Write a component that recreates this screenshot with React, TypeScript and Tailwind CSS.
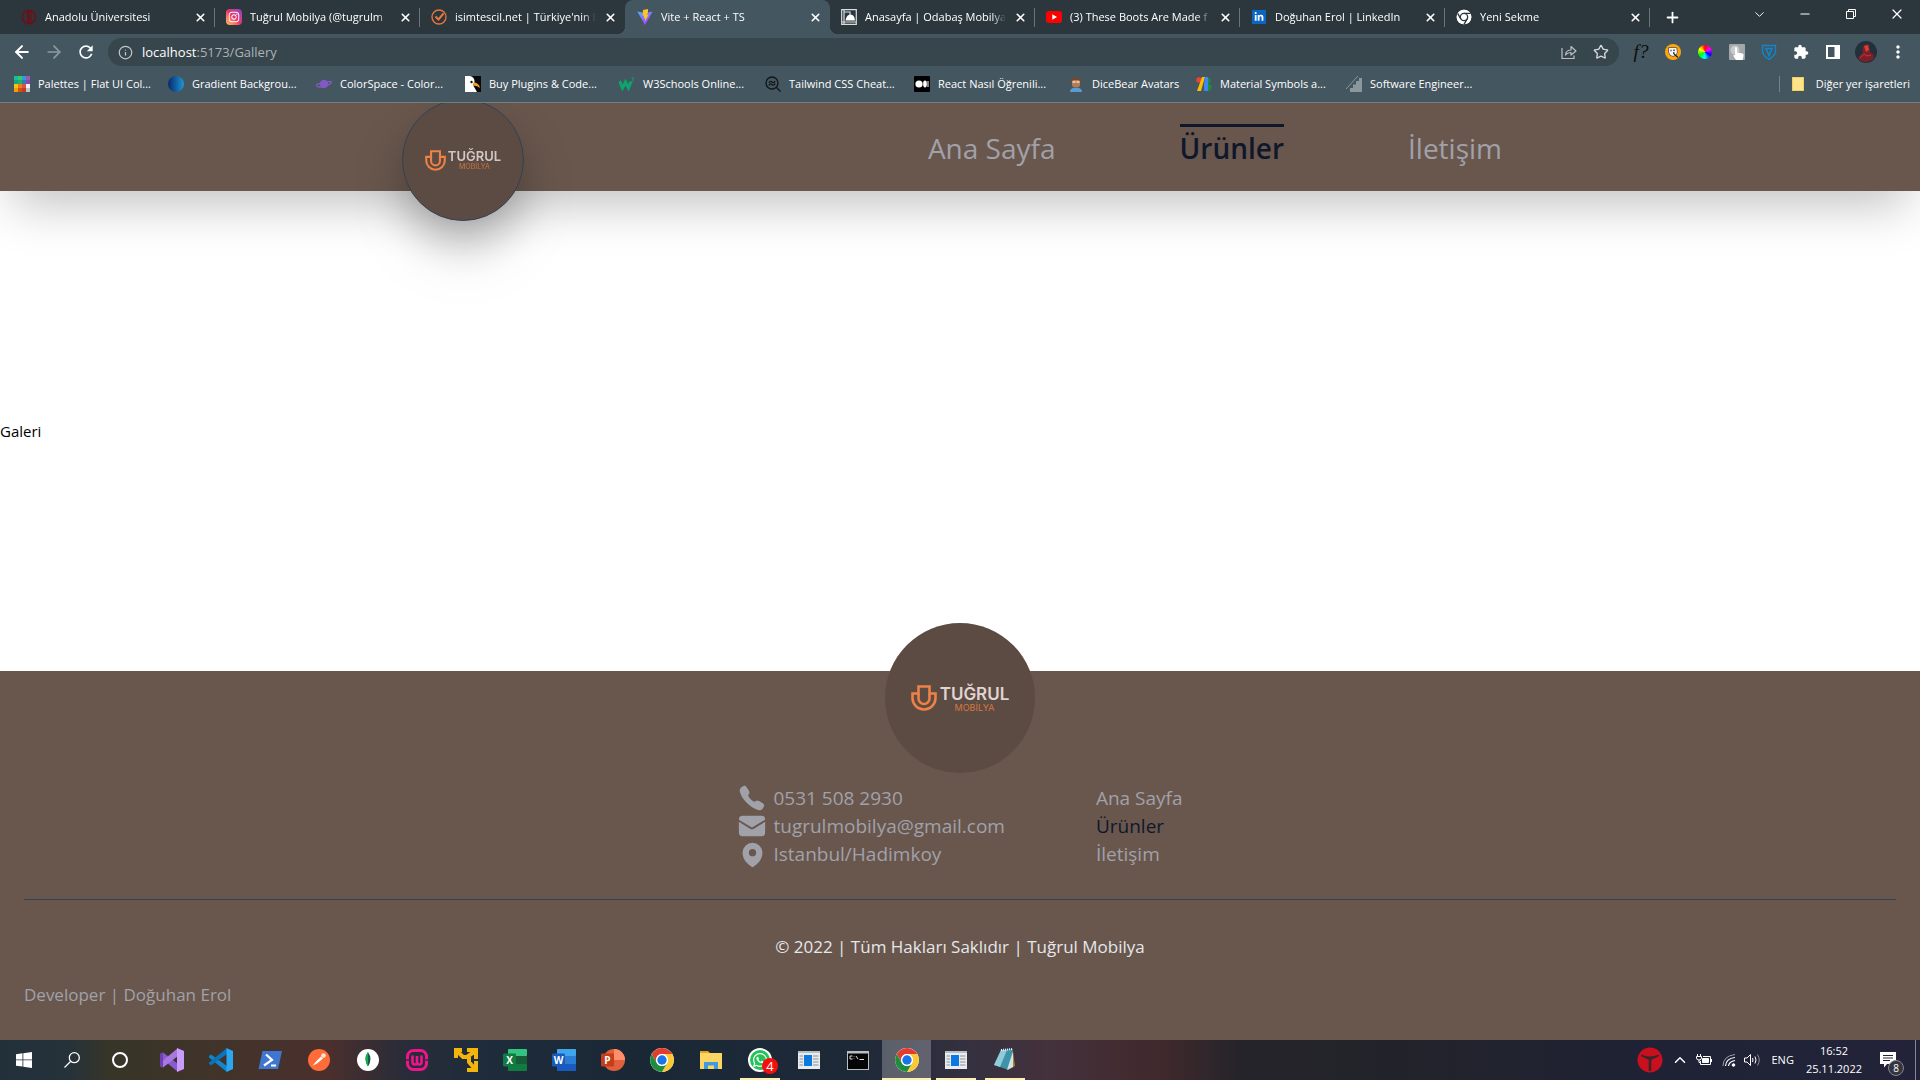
import React, { ReactNode } from "react";
import {
  LuArrowLeft,
  LuArrowRight,
  LuChevronDown,
  LuChevronUp,
  LuInfo,
  LuMinus,
  LuPlus,
  LuStar,
  LuX,
} from "react-icons/lu";
import { MdExtension, MdRefresh, MdMoreVert } from "react-icons/md";
import { HiEnvelope, HiMapPin } from "react-icons/hi2";
import { IoCall } from "react-icons/io5";
import { FaInstagram, FaLinkedinIn, FaWhatsapp } from "react-icons/fa";

/* ---------- Shared drawings ---------- */

function ChromeIcon({ className, mono = false }: { className: string; mono?: boolean }) {
  return (
    <svg viewBox="0 0 48 48" className={className} aria-hidden="true">
      <circle cx="24" cy="24" r="22" fill="#fff" />
      <path d="M4.95 13A22 22 0 0 1 43.05 13H24A11 11 0 0 0 14.47 29.5Z" fill={mono ? "#fff" : "#e33b2e"} />
      <path d="M43.05 13A22 22 0 0 1 24 46L33.53 29.5A11 11 0 0 0 24 13Z" fill={mono ? "#fff" : "#fcc934"} />
      <path d="M24 46A22 22 0 0 1 4.95 13L14.47 29.5A11 11 0 0 0 33.53 29.5Z" fill={mono ? "#fff" : "#1e8e3e"} />
      {mono ? (
        <g stroke="#2c373d" strokeWidth="4" fill="none">
          <circle cx="24" cy="24" r="11" />
          <path d="M24 13H44M14.5 29.5L5 13M33.5 29.5L24 46" />
        </g>
      ) : (
        <>
          <circle cx="24" cy="24" r="11" fill="#fff" />
          <circle cx="24" cy="24" r="8.6" fill="#1a73e8" />
        </>
      )}
    </svg>
  );
}

function Brand({ large = false }: { large?: boolean }) {
  return (
    <span className={large ? "flex items-center gap-[3px] font-['Inter',sans-serif]" : "flex items-center gap-0.5 font-['Inter',sans-serif]"}>
      <svg viewBox="0 0 26 26" className={large ? "size-[26px]" : "size-[21px]"} fill="none" stroke="#ee8145" strokeWidth="2.6" aria-hidden="true">
        <path d="M1.5 8.5H7.5V1.5H18.5V8.5H24.5V13A11.5 11.5 0 0 1 1.5 13Z" />
        <path d="M7.5 8.5V13.5A5.5 5.5 0 0 0 18.5 13.5V8.5" />
      </svg>
      <span className="flex flex-col items-center">
        <span className={large ? "text-[17px] leading-[18px] font-semibold text-[#e0d3d1]" : "text-[13px] leading-[14px] font-semibold text-[#d3c6c6]"}>TUĞRUL</span>
        <span className={large ? "text-[9px] leading-[9px] text-[#d67841]" : "text-[7px] leading-[8px] text-[#d07541]"}>MOBİLYA</span>
      </span>
    </span>
  );
}

/* ---------- Browser window ---------- */

type Tab = { title: string; icon: ReactNode; active?: boolean; divider?: boolean };

const tabs: Tab[] = [
  {
    title: "Anadolu Üniversitesi",
    divider: true,
    icon: (
      <svg viewBox="0 0 16 16" className="size-4" fill="none" stroke="#6d0f18" strokeWidth="1.8">
        <circle cx="8" cy="8" r="6.6" />
        <path d="M7 1V15M9.5 1V15" />
      </svg>
    ),
  },
  {
    title: "Tuğrul Mobilya (@tugrulm",
    divider: true,
    icon: (
      <span className="flex size-4 items-center justify-center rounded-[4px] bg-linear-to-tr from-[#fdc04a] via-[#e8336a] to-[#9036c8] text-white">
        <FaInstagram className="size-3" />
      </span>
    ),
  },
  {
    title: "isimtescil.net | Türkiye'nin l",
    icon: (
      <svg viewBox="0 0 16 16" className="size-4" fill="none" stroke="#e8783a">
        <circle cx="8" cy="8" r="7" strokeWidth="1.3" />
        <path d="M4.5 7.5L7.5 10.5L12.5 4.5" strokeWidth="2" />
      </svg>
    ),
  },
  {
    title: "Vite + React + TS",
    active: true,
    icon: (
      <svg viewBox="0 0 16 16" className="size-4">
        <defs>
          <linearGradient id="vite" x1="0" y1="0" x2="0.6" y2="1">
            <stop offset="0" stopColor="#47b5ff" />
            <stop offset="1" stopColor="#b43cfb" />
          </linearGradient>
        </defs>
        <path d="M.3 2.4L8 16L15.7 2.4L8 4Z" fill="url(#vite)" />
        <path d="M11 0L6 1L5.6 6.8L7.2 6.5L6.8 9.5L8.2 9.2L7.8 12.5L11.6 5.8L9.8 6.1L11 3.5Z" fill="#ffc41f" />
      </svg>
    ),
  },
  {
    title: "Anasayfa | Odabaş Mobilya",
    divider: true,
    icon: (
      <svg viewBox="0 0 16 16" className="size-4" fill="none" stroke="#d8dcde">
        <path d="M.7.7H15.3V15.3H.7ZM3 .7V15.3M.7 13H15M3 3H9V6" strokeWidth="1.2" />
        <path d="M4.5 11.5Q5.5 5.500 9.500 5.500T14 11.500Z" fill="#fff" stroke="none" />
      </svg>
    ),
  },
  {
    title: "(3) These Boots Are Made f",
    divider: true,
    icon: (
      <svg viewBox="0 0 16 16" className="size-4">
        <rect y="2" width="16" height="12" rx="3" fill="#f00" />
        <path d="M6.3 5.3V10.700L11 8Z" fill="#fff" />
      </svg>
    ),
  },
  {
    title: "Doğuhan Erol | LinkedIn",
    divider: true,
    icon: (
      <span className="flex size-[14px] items-center justify-center bg-[#0a66c2] text-white">
        <FaLinkedinIn className="size-[10px]" />
      </span>
    ),
  },
  { title: "Yeni Sekme", divider: true, icon: <ChromeIcon className="size-4" mono /> },
];

function TabStrip() {
  return (
    <div className="flex h-[34px] justify-between bg-[#2c373d]">
      <div className="flex pl-2.5">
        {tabs.map((tab) => (
          <div
            key={tab.title}
            className={
              tab.active
                ? "relative flex w-[205px] items-center gap-2 rounded-t-lg bg-[#44565f] pr-2 pl-3 before:absolute before:bottom-0 before:-left-2 before:size-2 before:bg-[radial-gradient(circle_at_0_0,transparent_8px,#44565f_8px)] after:absolute after:-right-2 after:bottom-0 after:size-2 after:bg-[radial-gradient(circle_at_100%_0,transparent_8px,#44565f_8px)]"
                : "relative flex w-[205px] items-center gap-2 pr-2 pl-[11px]"
            }
          >
            <span className="flex size-4 shrink-0 items-center justify-center">{tab.icon}</span>
            <button className="min-w-0 flex-1 mask-r-from-[90%] text-left text-[11px] leading-5 whitespace-nowrap text-white">
              {tab.title}
            </button>
            <button aria-label={`${tab.title} sekmesini kapat`} className="text-white">
              <LuX className="size-[13px]" strokeWidth={3} />
            </button>
            {tab.divider && <span className="absolute top-2 right-0 h-[19px] w-px bg-[#66737a]" />}
          </div>
        ))}
        <button aria-label="Yeni sekme" className="ml-3.5 text-white">
          <LuPlus className="size-[17px]" strokeWidth={2.5} />
        </button>
      </div>
      <div className="flex items-start text-white">
        <button aria-label="Sekmelerde ara" className="flex h-7 w-[46px] items-center justify-center">
          <LuChevronDown className="size-[15px]" strokeWidth={1.5} />
        </button>
        <button aria-label="Simge durumuna küçült" className="flex h-7 w-[46px] items-center justify-center">
          <LuMinus className="size-[14px]" />
        </button>
        <button aria-label="Geri yükle" className="flex h-7 w-[46px] items-center justify-center">
          <svg viewBox="0 0 10 10" className="size-[10px]" fill="none" stroke="currentColor">
            <path d="M.5 2.500H7.500V9.500H.5ZM2.500 2.500V.5H9.500V7.500H7.500" />
          </svg>
        </button>
        <button aria-label="Kapat" className="flex h-7 w-[46px] items-center justify-center">
          <LuX className="size-[16px]" strokeWidth={1.8} />
        </button>
      </div>
    </div>
  );
}

function Toolbar() {
  return (
    <div className="flex h-8 items-center bg-[#44565f] pt-1 text-white">
      <button aria-label="Geri" className="ml-3">
        <LuArrowLeft className="size-5" strokeWidth={2.4} />
      </button>
      <button aria-label="İleri" className="ml-3 text-[#8f9aa0]">
        <LuArrowRight className="size-5" />
      </button>
      <button aria-label="Yenile" className="ml-3">
        <MdRefresh className="size-5" />
      </button>
      <div className="ml-3 flex h-7 flex-1 items-center rounded-full bg-[#37454c] px-2.5">
        <LuInfo className="mr-[9px] size-[15px] text-[#c0c6c9]" />
        <label htmlFor="address" className="text-[13px] leading-5">
          localhost
        </label>
        <input id="address" defaultValue=":5173/Gallery" className="min-w-0 flex-1 bg-transparent text-[13px] leading-5 text-[#aab3b7] outline-none" />
        <button aria-label="Paylaş" className="mr-4 text-[#b9c0c4]">
          <svg viewBox="0 0 16 16" className="size-4" fill="none" stroke="currentColor" strokeWidth="1.2">
            <path d="M1 4V14.500H13V11.500" />
            <path d="M4.500 11Q5 6 10 6V2.500L15 7L10 11V8.500Q6.500 8.500 4.500 11Z" strokeLinejoin="round" />
          </svg>
        </button>
        <button aria-label="Yer işaretlerine ekle" className="text-[#d5dadc]">
          <LuStar className="size-4" />
        </button>
      </div>
      <div className="flex items-center gap-4 pr-3 pl-3.5">
        <button className="w-4 font-['Liberation_Serif',serif] text-[19px] leading-4 text-[#0b0d0e] italic">f?</button>
        <button aria-label="Çerez uzantısı">
          <svg viewBox="0 0 16 16" className="size-4">
            <circle cx="8" cy="8" r="8" fill="#ffa50c" />
            <path d="M3.500 5Q3 3 5 3.500L10 3.500Q12.500 3 12 5.500L12.500 8Q12 12 8 12.500Q4 12 3.500 8Z" fill="#f4f4f4" stroke="#222" strokeWidth=".6" />
            <path d="M5.500 6.500H6.500M9 5.500V7M8 9H9.500M9 10L13 13.500" stroke="#222" strokeWidth="1.300" />
          </svg>
        </button>
        <button aria-label="Renk seçici" className="flex size-4 items-center justify-center">
          <span className="size-[14px] rounded-full bg-[conic-gradient(#f00,#f0f,#00f,#0ff,#0f0,#ff0,#f00)]" />
        </button>
        <button aria-label="Tıklama uzantısı">
          <svg viewBox="0 0 16 16" className="size-4">
            <rect width="16" height="16" rx="1" fill="#a3a7a9" />
            <circle cx="6" cy="6" r="4.500" fill="#c8cbcc" />
            <path d="M6 3.500Q7.500 2.500 8 4V8.500L13.500 9.500Q15 10 14.500 12L13.500 16H7L4 11.500L6 11Z" fill="#fff" />
          </svg>
        </button>
        <button aria-label="Kalkan uzantısı">
          <svg viewBox="0 0 16 16" className="size-4" fill="none" stroke="#1286c7">
            <path d="M1.500 1.500H14.500V7Q14 12 8 15.300Q2 12 1.500 7Z" strokeWidth="1.400" />
            <path d="M5 4.500H11L8 11.500Z" strokeWidth="1.600" />
          </svg>
        </button>
        <button aria-label="Uzantılar">
          <MdExtension className="size-4" />
        </button>
        <button aria-label="Yan panel">
          <svg viewBox="0 0 14 14" className="mx-px size-[14px]">
            <path d="M0 0H14V14H0ZM2 2V12H8.500V2Z" fill="#fff" fillRule="evenodd" />
          </svg>
        </button>
        <button aria-label="Profil" className="-ml-0.5">
          <svg viewBox="0 0 22 22" className="size-[22px]">
            <circle cx="11" cy="11" r="11" fill="#22303c" />
            <path d="M3 18Q4 14 7.500 12.500L7.500 6Q10 2 14 4L15 11Q20 13 18.500 18Q11 24.500 3 18Z" fill="#7c1f28" />
            <path d="M9 5L13 4L14 9L11 11Z" fill="#d4403a" />
            <path d="M5 17L9 13L12 15L16 14" stroke="#c03a38" fill="none" />
          </svg>
        </button>
        <button aria-label="Menü" className="-ml-[5px]">
          <MdMoreVert className="size-5" />
        </button>
      </div>
    </div>
  );
}

const flatColors = ["bg-[#1abc9c]", "bg-[#2ecc71]", "bg-[#3498db]", "bg-[#9b59b6]", "bg-[#16a085]", "bg-[#27ae60]", "bg-[#2980b9]", "bg-[#8e44ad]", "bg-[#f1c40f]", "bg-[#e67e22]", "bg-[#e74c3c]", "bg-[#ecf0f1]", "bg-[#f39c12]", "bg-[#d35400]", "bg-[#c0392b]", "bg-[#bdc3c7]"];

const bookmarks: { title: string; width: string; icon: ReactNode }[] = [
  {
    title: "Palettes | Flat UI Col...",
    width: "w-[154px]",
    icon: (
      <span className="grid size-4 grid-cols-4">
        {flatColors.map((c) => (
          <span key={c} className={c} />
        ))}
      </span>
    ),
  },
  { title: "Gradient Backgrou...", width: "w-[148px]", icon: <span className="size-4 rounded-full bg-linear-to-r from-[#0a2a6c] to-[#2196d6]" /> },
  {
    title: "ColorSpace - Color...",
    width: "w-[149px]",
    icon: (
      <svg viewBox="0 0 16 16" className="size-4">
        <circle cx="8" cy="8" r="4.200" fill="#8259c4" />
        <path d="M1 10.500Q-1 8 5 7.500M11 6Q17 4.500 14.500 7.500Q11 11 1.500 11" fill="none" stroke="#8259c4" strokeWidth="1.400" />
      </svg>
    ),
  },
  {
    title: "Buy Plugins & Code...",
    width: "w-[154px]",
    icon: (
      <svg viewBox="0 0 16 16" className="size-4">
        <rect width="16" height="16" fill="#0a0a0a" />
        <path d="M0 0H5Q10 1 9.500 6.500L8 9L12 16H0Z" fill="#fff" />
        <path d="M8.500 6.500Q14 6.500 15 12Q11 9 8 10Z" fill="#f4a02c" />
        <circle cx="6.500" cy="6" r="1.200" fill="#111" />
      </svg>
    ),
  },
  {
    title: "W3Schools Online...",
    width: "w-[146px]",
    icon: (
      <svg viewBox="0 0 16 16" className="size-4" fill="none" stroke="#0aa66c">
        <path d="M.5 5L3.500 12L6.500 6L9.500 12L12 5.500" strokeWidth="3" />
        <path d="M12.500 2H15L13.500 3.500Q16 4 14 5.500H12.500" strokeWidth=".8" />
      </svg>
    ),
  },
  {
    title: "Tailwind CSS Cheat...",
    width: "w-[149px]",
    icon: (
      <svg viewBox="0 0 16 16" className="size-4" fill="none" stroke="#111618" strokeWidth="1.300">
        <circle cx="7" cy="7" r="6" />
        <path d="M11.500 11.500L15.500 15.500M4 7Q5 4.500 7 6T10 5M4 9.500Q5 7 7 8.500T10 7.500" />
      </svg>
    ),
  },
  {
    title: "React Nasıl Öğrenili...",
    width: "w-[154px]",
    icon: (
      <svg viewBox="0 0 16 16" className="size-4">
        <rect width="16" height="16" rx="1" fill="#000" />
        <circle cx="5" cy="8" r="3.600" fill="#fff" />
        <ellipse cx="11" cy="8" rx="1.900" ry="3.400" fill="#fff" />
        <rect x="13.500" y="5" width="1" height="6" fill="#fff" />
      </svg>
    ),
  },
  {
    title: "DiceBear Avatars",
    width: "w-[128px]",
    icon: (
      <svg viewBox="0 0 16 16" className="size-4">
        <path d="M3 3Q8-1 13 3V9H3Z" fill="#6d4a34" />
        <rect x="4" y="4" width="8" height="7" rx="2" fill="#b97a50" />
        <path d="M4.500 6H7.500M8.500 6H11.500" stroke="#e8e0d8" strokeWidth="1.400" />
        <path d="M2 16Q2 11.500 8 11.500T14 16Z" fill="#5a9bd0" />
      </svg>
    ),
  },
  {
    title: "Material Symbols a...",
    width: "w-[150px]",
    icon: (
      <svg viewBox="0 0 16 16" className="size-4">
        <circle cx="3" cy="4" r="2.700" fill="#ea4335" />
        <path d="M6 1H9L5 15H1Z" fill="#fbbc04" />
        <path d="M9 1H12V15H8V8Z" fill="#4285f4" />
        <path d="M12 2Q15 2 14.500 5T12 8ZM12 8Q16 8 15.500 11.500T12 15Z" fill="#1e8e3e" />
      </svg>
    ),
  },
  {
    title: "Software Engineer...",
    width: "w-[150px]",
    icon: (
      <svg viewBox="0 0 16 16" className="size-4">
        <path d="M4 16V12H7V8.500H10V5H13V2H16V16Z" fill="#8b979d" />
        <path d="M0 13L12 0" stroke="#8b979d" />
      </svg>
    ),
  },
];

function BookmarksBar() {
  return (
    <div className="flex h-[37px] items-center border-b border-[#6f8084] bg-[#44565f] pr-2.5 pl-3.5 text-[11px] leading-5 text-white">
      {bookmarks.map((b) => (
        <button key={b.title} className={`flex items-center gap-2 whitespace-nowrap ${b.width}`}>
          <span className="flex size-4 shrink-0">{b.icon}</span>
          {b.title}
        </button>
      ))}
      <span className="ml-auto h-4 w-px bg-[#75848b]" />
      <button className="flex items-center gap-3 pl-3 whitespace-nowrap">
        <span className="h-[14px] w-3 border border-[#f3cf5e] bg-[#ffe38a]" />
        Diğer yer işaretleri
      </button>
    </div>
  );
}

/* ---------- Web page ---------- */

const links = [
  { label: "Ana Sayfa", active: false },
  { label: "Ürünler", active: true },
  { label: "İletişim", active: false },
];

function SiteHeader() {
  return (
    <header className="relative z-10 h-[88px] bg-[#69574d] shadow-2xl">
      <div className="mx-auto flex max-w-[1116px] items-start justify-between pr-4">
        <a href="#" className="-mt-1 flex size-[122px] items-center justify-center rounded-full border border-slate-700 bg-[#5c4b42] shadow-2xl drop-shadow-2xl">
          <Brand />
        </a>
        <nav className="mt-[21px] flex gap-[124px] text-[28px] leading-[42px]">
          {links.map((l) => (
            <a
              key={l.label}
              href="#"
              className={
                l.active
                  ? "border-t-[3px] border-slate-900 font-semibold text-slate-900"
                  : "border-t-[3px] border-transparent text-[#a1a1aa]"
              }
            >
              {l.label}
            </a>
          ))}
        </nav>
      </div>
    </header>
  );
}

const contacts = [
  { text: "0531 508 2930", icon: <IoCall className="size-7" /> },
  { text: "tugrulmobilya@gmail.com", icon: <HiEnvelope className="size-[30px]" /> },
  { text: "Istanbul/Hadimkoy", icon: <HiMapPin className="size-[29px]" /> },
];

function SiteFooter() {
  return (
    <footer className="flex flex-col bg-[#69574d] px-6 pb-[31px] text-[#a1a1aa]">
      <a href="#" className="-mt-12 flex size-[150px] items-center justify-center self-center rounded-full bg-[#5c4b42]">
        <Brand large />
      </a>
      <div className="mt-[11px] flex justify-center gap-[91px] text-[19px] leading-7">
        <ul>
          {contacts.map((c) => (
            <li key={c.text} className="flex h-7 items-center gap-1.5">
              <span className="flex w-[30px] justify-center">{c.icon}</span>
              {c.text}
            </li>
          ))}
        </ul>
        <nav className="flex flex-col">
          {links.map((l) => (
            <a key={l.label} href="#" className={l.active ? "text-slate-900" : ""}>
              {l.label}
            </a>
          ))}
        </nav>
      </div>
      <hr className="mt-[31px] border-slate-700" />
      <p className="mt-[33px] text-center text-[17px] leading-7 text-gray-200">© 2022 | Tüm Hakları Saklıdır | Tuğrul Mobilya</p>
      <p className="mt-5 text-[17px] leading-7">Developer | Doğuhan Erol</p>
    </footer>
  );
}

/* ---------- Taskbar ---------- */

function OfficeIcon({ letter, dark, mid, light, round = false }: { letter: string; dark: string; mid: string; light: string; round?: boolean }) {
  return (
    <svg viewBox="0 0 24 24" className="size-6">
      {round ? (
        <>
          <circle cx="13" cy="12" r="11" fill={mid} />
          <path d="M13 1A11 11 0 0 1 24 12H13Z" fill={light} />
        </>
      ) : (
        <>
          <rect x="5" y="1" width="19" height="22" rx="1.500" fill={mid} />
          <rect x="5" y="1" width="19" height="7" rx="1" fill={light} />
          <rect x="5" y="16" width="19" height="7" rx="1" fill={dark} />
        </>
      )}
      <rect x="0" y="5.500" width="13" height="13" rx="1.200" fill={dark} />
      <text x="6.500" y="15.700" textAnchor="middle" fontSize="10" fontWeight="700" fill="#fff">
        {letter}
      </text>
    </svg>
  );
}

const windowIcon = (
  <svg viewBox="0 0 22 18" className="h-[18px] w-[22px]">
    <rect width="22" height="18" fill="#e9ecee" />
    <rect width="22" height="2" fill="#b9bec2" />
    <rect x="6" y="4" width="8" height="11" fill="#0a7ae0" />
    <path d="M1.500 5H5M1.500 8H5M1.500 11H5M1.500 14H5M15 5H20.500M15 8H20.500M15 11H20.500M15 14H20.500" stroke="#8b9094" />
  </svg>
);

const apps: { name: string; icon: ReactNode; open?: boolean; focused?: boolean; badge?: string }[] = [
  {
    name: "Visual Studio",
    icon: (
      <svg viewBox="0 0 24 24" className="size-6">
        <path d="M0 6L3 4.500L18 16V24L0 9Z" fill="#8a5bd0" />
        <path d="M0 18L3 19.500L18 8V0L0 15Z" fill="#a877e0" />
        <path d="M0 6V18L3 19.500V4.500Z" fill="#6e3fb5" />
        <path d="M17 0L24 3V21L17 24Z" fill="#c99bfa" />
      </svg>
    ),
  },
  {
    name: "Visual Studio Code",
    icon: (
      <svg viewBox="0 0 24 24" className="size-6">
        <path d="M0 8L2 6.500L18 18V24L0 9.500Z" fill="#1186cf" />
        <path d="M0 15.500L2 17.500L18 6V0L0 14.500Z" fill="#0a73ba" />
        <path d="M17.500 0L24 3V21L17.500 24Z" fill="#2aa7f2" />
      </svg>
    ),
  },
  {
    name: "PowerShell",
    icon: (
      <svg viewBox="0 0 24 24" className="size-6">
        <path d="M4.500 3H24L20 21H.5Z" fill="#3f77d0" />
        <path d="M8 6.500L14 12L6 17.500M13 17.500H18" fill="none" stroke="#fff" strokeWidth="2.200" />
      </svg>
    ),
  },
  {
    name: "Postman",
    icon: (
      <svg viewBox="0 0 24 24" className="size-6">
        <circle cx="12" cy="12" r="11" fill="#ff6c37" />
        <path d="M5 18.500L8.500 14L14 8.500L16 10.500L10 15.500L6 17.500Z" fill="#fff" />
        <circle cx="16.500" cy="7.500" r="2.300" fill="#fde3d8" />
      </svg>
    ),
  },
  {
    name: "MongoDB",
    icon: (
      <svg viewBox="0 0 24 24" className="size-6">
        <circle cx="12" cy="12" r="11" fill="#fff" />
        <path d="M12 4Q17 11 12 18.500Q7 11 12 4Z" fill="#116149" />
        <path d="M12 4Q7 11 12 18.500V20" fill="#13aa52" />
      </svg>
    ),
  },
  {
    name: "WampServer",
    icon: (
      <svg viewBox="0 0 24 24" className="size-6" fill="none" stroke="#f0148c">
        <rect x="2.500" y="2.500" width="19" height="19" rx="6" strokeWidth="3" />
        <path d="M7.500 7.500V14Q7.500 16.500 9.800 16.500T12 14V8V14Q12 16.500 14.300 16.500T16.500 14V7.500" strokeWidth="2.600" />
        <path d="M0 12H5M19 12H24" stroke="#33303a" strokeWidth="1.500" />
      </svg>
    ),
  },
  {
    name: "VMware",
    icon: (
      <svg viewBox="0 0 24 24" className="size-6" fill="none" stroke="#f3b40c" strokeWidth="4">
        <path d="M0 2H8M2 0V10M13 2H24M22 0V11M22 13V24M13 22H24M2 2L9 9H13L20 4M15 9V14L21 21" />
      </svg>
    ),
  },
  { name: "Excel", icon: <OfficeIcon letter="X" dark="#107c41" mid="#185c37" light="#33c481" /> },
  { name: "Word", icon: <OfficeIcon letter="W" dark="#185abd" mid="#2b7cd3" light="#41a5ee" /> },
  { name: "PowerPoint", icon: <OfficeIcon letter="P" dark="#c43e1c" mid="#e0603d" light="#ff8f6b" round /> },
  { name: "Google Chrome", icon: <ChromeIcon className="size-[26px]" /> },
  {
    name: "Dosya Gezgini",
    icon: (
      <svg viewBox="0 0 22 20" className="h-5 w-[22px]">
        <path d="M0 1H8L10 3V8H0Z" fill="#e6a313" />
        <rect y="3" width="22" height="16" fill="#fdd565" />
        <path d="M4 19V12H18V19H14V15.500H8V19Z" fill="#3f9be0" />
      </svg>
    ),
  },
  {
    name: "WhatsApp",
    open: true,
    badge: "4",
    icon: (
      <span className="flex size-6 items-center justify-center rounded-full border-2 border-white bg-[#25c25a] text-white">
        <FaWhatsapp className="size-4" />
      </span>
    ),
  },
  { name: "Uygulama", icon: windowIcon },
  {
    name: "Komut İstemi",
    icon: (
      <svg viewBox="0 0 22 19" className="h-[19px] w-[22px]">
        <rect width="22" height="19" fill="#b9bec2" />
        <rect x="1" y="2.500" width="20" height="15.500" fill="#050505" />
        <path d="M5.500 5H3V8H5.500M7 5.500V6M7 7.500V8M9 5L11 8M12.500 8.500H17" fill="none" stroke="#ddd" />
      </svg>
    ),
  },
  { name: "Chrome penceresi", icon: <ChromeIcon className="size-[26px]" />, open: true, focused: true },
  { name: "Uygulama penceresi", icon: windowIcon, open: true },
  {
    name: "Not Defteri",
    open: true,
    icon: (
      <svg viewBox="0 0 24 24" className="size-6">
        <path d="M20 3L22 18L17 21Z" fill="#a9802f" />
        <path d="M8 2L20 1L16 22L1 17Z" fill="#3e93a8" />
        <path d="M8 2L14 2L7 19L1 17Z" fill="#8fcbd8" />
        <path d="M14 22L20 3L20 19Z" fill="#cfe4e8" />
        <path d="M8 2L20 1" stroke="#e9f5f7" strokeWidth="2" strokeDasharray="1 1" />
      </svg>
    ),
  },
];

function Taskbar() {
  return (
    <div className="flex h-10 items-stretch justify-between bg-[linear-gradient(90deg,#22303a_0px,#26323a_70px,#373528_110px,#42332a_230px,#4a2f2d_330px,#2a2c38_400px,#1f2c3b_470px,#1a2836_640px,#1e2938_860px,#33303f_960px,#44313c_1050px,#40292c_1160px,#25242a_1240px,#22232a_1400px,#1f2234_1640px,#22233a_100%)] text-white">
      <div className="flex">
        <button aria-label="Başlat" className="flex w-12 items-center justify-center">
          <svg viewBox="0 0 16 16" className="size-4" fill="#fff">
            <path d="M0 2.200L6.500 1.300V7.500H0ZM7.300 1.200L16 0V7.500H7.300ZM0 8.300H6.500V14.600L0 13.700ZM7.300 8.300H16V16L7.300 14.700Z" />
          </svg>
        </button>
        <button aria-label="Ara" className="flex w-12 items-center justify-center">
          <svg viewBox="0 0 16 16" className="size-4" fill="none" stroke="#fff" strokeWidth="1.300">
            <circle cx="10.300" cy="5.700" r="5" />
            <path d="M6.500 9.500L.5 15.500" />
          </svg>
        </button>
        <button aria-label="Cortana" className="mr-[3px] flex w-12 items-center justify-center">
          <span className="size-4 rounded-full border-2 border-white" />
        </button>
        {apps.map((app) => (
          <button
            key={app.name}
            aria-label={app.name}
            className={app.focused ? "relative flex w-[49px] items-center justify-center bg-white/25" : "relative flex w-[49px] items-center justify-center"}
          >
            {app.icon}
            {app.badge && (
              <span className="absolute right-1.5 bottom-1.5 flex size-4 items-center justify-center rounded-full bg-[#f5100c] text-[13px] leading-none">
                {app.badge}
              </span>
            )}
            {app.open && (
              <span className={app.focused ? "absolute inset-x-0 bottom-0 h-0.5 bg-[#fdf0b0]" : "absolute bottom-0 h-0.5 w-10 bg-[#fdf0b0]"} />
            )}
          </button>
        ))}
      </div>
      <div className="flex items-center">
        <button aria-label="Tepsi uygulaması">
          <svg viewBox="0 0 26 26" className="size-[26px]">
            <circle cx="13" cy="13" r="12.500" fill="#c9101e" />
            <path d="M4 7.500Q9 9.500 13 9.500T22 7.500L21.500 9.500Q17 11 14.300 13V24H11.700V13Q9 11 4.500 9.500Z" fill="#3a2528" />
          </svg>
        </button>
        <button aria-label="Gizli simgeleri göster" className="ml-2">
          <LuChevronUp className="size-[18px]" />
        </button>
        <button aria-label="Pil" className="ml-[7px]">
          <svg viewBox="0 0 16 12" className="h-3 w-4" fill="none" stroke="#fff">
            <path d="M1.500 0V2M4.500 0V2M.5 2.500H5.500V4Q5.500 6 3 6Q.5 6 .5 4ZM3 6V8.500H5" />
            <path d="M7 2.500H14.500V10.500H4.500V7" />
            <path d="M6.500 4.500H12.500V8.500H6.500Z" fill="#fff" />
            <path d="M15.500 5V8" />
          </svg>
        </button>
        <button aria-label="Ağ" className="ml-2.5">
          <svg viewBox="0 0 14 14" className="size-[14px]" fill="none" stroke="#fff">
            <path d="M1 13Q1 3 13 1.500" stroke="#9a9ba8" />
            <path d="M3.500 13Q4 5.500 13 4.500M6.500 13Q7 8.500 13 7.500" strokeWidth="1.200" />
            <circle cx="11.500" cy="12" r="1.300" fill="#fff" />
          </svg>
        </button>
        <button aria-label="Ses" className="ml-2">
          <svg viewBox="0 0 17 14" className="h-[14px] w-[17px]" fill="none" stroke="#fff">
            <path d="M.5 5H3L6.500 1.500V12.500L3 9H.5Z" />
            <path d="M8.500 5Q9.500 7 8.500 9M11 3.500Q13 7 11 10.500" />
            <path d="M13.500 1.500Q17 7 13.500 12.500" stroke="#8d8e9b" />
          </svg>
        </button>
        <button className="ml-2.5 text-[11px] leading-5">ENG</button>
        <button className="ml-3 flex flex-col items-center text-[11px] leading-[18px]">
          <span>16:52</span>
          <span>25.11.2022</span>
        </button>
        <button aria-label="8 yeni bildirim" className="relative mr-[19px] ml-[18px]">
          <svg viewBox="0 0 16 16" className="size-4">
            <path d="M0 0H16V12H7L4 15.500V12H0Z" fill="#fff" />
            <path d="M3 3.500H13M3 6H13M3 8.500H10" stroke="#22233a" />
          </svg>
          <span className="absolute -right-2 -bottom-2 flex size-4 items-center justify-center rounded-full border border-[#85868e] bg-[#34353f] text-[10px] leading-none">
            8
          </span>
        </button>
        <span className="mr-1 h-10 w-px bg-[#85868e]" />
      </div>
    </div>
  );
}

export default function App() {
  return (
    <div className="flex min-h-screen flex-col bg-white font-['Open_Sans','Noto_Sans',sans-serif]">
      <TabStrip />
      <Toolbar />
      <BookmarksBar />
      <div className="flex flex-1 flex-col overflow-hidden">
        <SiteHeader />
        <main className="flex flex-1 items-center text-[15px] leading-6 text-black">Galeri</main>
        <SiteFooter />
      </div>
      <Taskbar />
    </div>
  );
}
